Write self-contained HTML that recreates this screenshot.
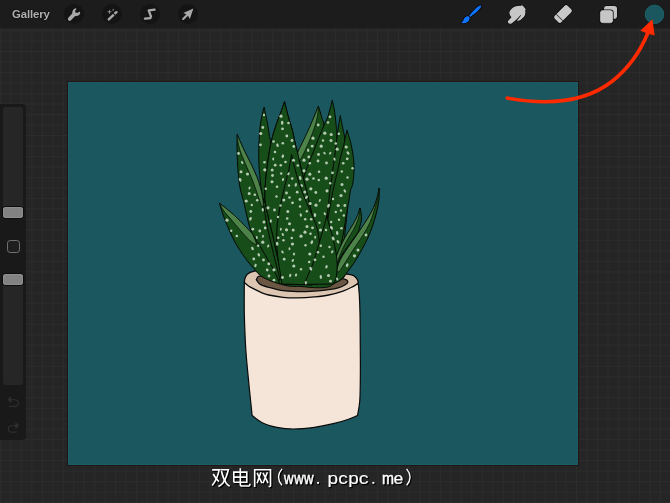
<!DOCTYPE html>
<html><head><meta charset="utf-8"><title>Procreate</title>
<style>
html,body{margin:0;padding:0;background:#252525;}
body{width:670px;height:503px;overflow:hidden;position:relative;font-family:"Liberation Sans",sans-serif;}
#grid{position:absolute;left:0;top:0;width:670px;height:503px;background-color:#252525;}
#topbar{position:absolute;left:0;top:0;width:670px;height:28px;background:#1c1c1c;}
#gallery{position:absolute;left:12.2px;top:6.6px;font-size:11.4px;line-height:14px;color:#b2b2b2;letter-spacing:-0.12px;font-weight:bold;text-shadow:0 0 1.5px #000,0 0 1px #000;}
.cb{position:absolute;top:3.8px;width:20px;height:20px;border-radius:50%;background:#141414;}
#canvas{position:absolute;left:68px;top:82px;width:510px;height:382.5px;background:#1b575f;box-shadow:0 0 0 1px #201616, inset 0 0 0 1px #1d5c64;}
#side{position:absolute;left:-6px;top:104px;width:31.7px;height:336px;border-radius:4px;background:#191919;}
.track{position:absolute;left:3px;width:20px;background:#262626;border-radius:3px;}
.handle{position:absolute;left:3px;width:20px;height:10.8px;border-radius:3.2px;background:#828282;box-shadow:inset 0 0 0 1px #8e8e8e,0 0 0 1px #0c0c0c;}
#sq{position:absolute;left:6.6px;top:239.8px;width:11px;height:11px;border:1.3px solid #707070;border-radius:3.2px;background:#1e1e1e;}
svg{position:absolute;left:0;top:0;will-change:transform;}
#gallery{will-change:transform;}
</style></head><body>
<div id="grid"></div>
<svg width="670" height="503" viewBox="0 0 670 503">
<defs><pattern id="gp" x="-0.05" y="-1.4" width="10.475" height="10.49" patternUnits="userSpaceOnUse">
<rect x="0" y="0" width="1" height="10.49" fill="#2c2c2c"/><rect x="0" y="0" width="10.475" height="1" fill="#2c2c2c"/></pattern></defs>
<rect x="0" y="28" width="670" height="475" fill="url(#gp)"/>
</svg>
<div id="canvas"></div>
<div id="topbar">
 <div id="gallery">Gallery</div>
 <div class="cb" style="left:64.1px"></div><div class="cb" style="left:102.0px"></div><div class="cb" style="left:139.9px"></div><div class="cb" style="left:177.8px"></div>
</div>
<div id="side"></div>
<div class="track" style="top:106.6px;height:111px"></div>
<div class="track" style="top:274px;height:111px"></div>
<div class="handle" style="top:207.2px"></div>
<div class="handle" style="top:274px"></div>
<div id="sq"></div>
<svg width="670" height="503" viewBox="0 0 670 503">
<path d="M244.3,282.5 C244.3,287.7 244.1,302.5 244.3,313.7 C244.6,324.9 245.1,338.3 245.8,349.5 C246.5,360.7 247.8,372.2 248.6,380.9 C249.4,389.6 250.1,396.1 250.7,401.8 C251.3,407.6 251.9,413.1 252.1,415.4 C253.8,416.6 258.1,420.7 262.2,422.7 C266.3,424.7 271.6,426.2 276.8,427.3 C282.0,428.4 287.2,429.0 293.5,429.0 C299.8,429.0 307.8,428.2 314.4,427.3 C321.0,426.4 327.6,425.0 333.2,423.7 C338.8,422.4 343.8,420.9 347.8,419.5 C351.9,418.1 355.9,416.2 357.5,415.6 C357.9,413.3 359.2,407.6 359.7,401.8 C360.2,396.0 360.2,389.6 360.3,380.9 C360.4,372.2 360.4,360.7 360.3,349.5 C360.2,338.3 360.2,322.8 360.0,313.7 C359.8,304.6 359.6,299.9 359.3,295.0 C359.0,290.1 358.5,285.8 358.3,284.0 Z" fill="#f5e5d8" stroke="#0a0a0a" stroke-width="1.2" stroke-linejoin="round"/><path d="M244.3,282.5 C245.0,283.1 246.8,284.9 248.5,286.0 C250.2,287.1 252.2,288.1 254.3,289.2 C256.4,290.3 258.6,291.4 261.0,292.4 C263.4,293.4 265.0,294.2 268.7,295.0 C272.4,295.8 278.2,296.8 283.0,297.3 C287.8,297.8 292.1,298.0 297.3,297.9 C302.5,297.8 309.1,297.4 314.3,296.9 C319.5,296.4 323.9,296.0 328.7,295.0 C333.5,294.0 339.0,292.5 343.0,291.1 C347.0,289.7 350.0,288.1 352.5,286.8 C355.0,285.5 356.9,284.1 357.8,283.5 Q358.8,281 356.4,278.2 Q354.5,275.6 351.6,274.9 L345.8,273.9 L300,268 L254.3,271.1 Q249.5,272 247.2,274.4 Q244.6,277 244.3,282.5 Z" fill="#dcc6b2" stroke="#0a0a0a" stroke-width="1.3" stroke-linejoin="round"/><path d="M256.2,279.7 C256.7,280.3 258.0,282.5 259.1,283.5 C260.2,284.5 261.4,285.0 263.0,285.6 C264.6,286.2 265.4,286.5 268.7,287.3 C272.0,288.1 278.2,290.0 283.0,290.7 C287.8,291.4 292.1,291.5 297.3,291.6 C302.5,291.7 309.1,291.4 314.3,291.1 C319.5,290.8 324.7,290.2 328.7,289.7 C332.7,289.1 335.5,288.6 338.2,287.8 C340.9,287.0 343.3,285.8 344.9,284.9 C346.5,284.0 347.5,283.3 347.8,282.5 C348.1,281.7 347.6,280.7 346.8,280.1 C346.0,279.5 343.6,278.9 343.0,278.7 L300,270 L258,276.5 Z" fill="#6b5644" stroke="#0a0a0a" stroke-width="1.2" stroke-linejoin="round"/><defs><clipPath id="pc"><path d="M257.6,272.6 C258.1,273.1 258.6,274.6 260.5,275.8 C262.4,277.1 265.8,278.8 268.7,280.1 C271.6,281.4 275.0,282.5 278.2,283.5 C281.4,284.5 285.2,285.4 287.8,285.9 C290.4,286.4 291.5,286.3 293.5,286.4 C295.5,286.5 297.3,286.2 300.0,286.4 C302.7,286.5 306.4,287.1 309.6,287.3 C312.8,287.5 315.9,287.9 319.1,287.8 C322.3,287.7 326.1,287.5 328.7,286.8 C331.2,286.1 332.2,284.8 334.4,283.5 C336.6,282.2 340.1,280.7 342.0,279.2 C343.9,277.7 344.8,275.8 345.8,274.4 C346.8,273.0 347.6,271.6 348.0,271.0 L400,271 L400,90 L200,90 L200,272.6 Z"/></clipPath></defs><g clip-path="url(#pc)"><path d="M262,200 L340,200 L346,275 L338,290 L262,290 L256,274 Z" fill="#174d18"/><path d="M264.1,107.0 C263.7,108.7 262.4,112.9 261.7,116.9 C261.0,120.9 260.2,124.5 259.7,130.8 C259.2,137.1 258.7,147.3 258.7,154.6 C258.7,161.9 259.1,167.8 259.7,174.5 C260.3,181.2 261.1,190.1 262.1,195.0 C263.1,199.9 264.9,202.5 265.5,204.0 L272.0,204.0 C272.0,196.7 272.2,169.9 272.0,160.0 C271.8,150.1 271.4,148.6 271.0,144.7 C270.6,140.8 270.2,140.0 269.6,136.7 C269.1,133.4 268.4,128.8 267.7,124.8 C267.0,120.8 265.9,115.9 265.3,112.9 C264.7,109.9 264.3,108.0 264.1,107.0 Z" fill="#174d18" stroke="#050a05" stroke-width="1" stroke-linejoin="round"/><path d="M237.2,134.5 C237.2,136.5 237.0,142.3 237.0,146.7 C237.0,151.0 237.2,156.0 237.4,160.6 C237.6,165.2 238.0,170.2 238.4,174.5 C238.8,178.8 239.2,183.1 239.8,186.5 C240.4,189.9 241.1,192.1 241.8,195.0 C242.5,197.9 243.4,200.4 244.2,203.9 C245.0,207.4 245.9,211.8 246.8,215.8 C247.7,219.8 248.5,223.8 249.8,227.8 C251.1,231.8 252.7,234.3 254.7,239.7 C256.7,245.1 259.8,253.3 262.0,260.0 C264.2,266.7 267.0,276.7 268.0,280.0 L280.0,280.0 C278.0,271.7 271.0,244.2 268.0,230.0 C265.0,215.8 263.4,202.2 262.1,195.0 C260.8,187.8 261.0,189.6 260.1,186.5 C259.2,183.4 258.2,180.3 256.7,176.5 C255.1,172.7 252.8,167.7 250.8,163.6 C248.8,159.5 246.6,155.5 244.8,151.7 C243.0,147.9 241.1,143.6 239.8,140.7 C238.5,137.8 237.6,135.5 237.2,134.5 Z" fill="#174d18" stroke="#050a05" stroke-width="1" stroke-linejoin="round"/><path d="M318.4,106.3 C317.8,107.7 316.3,111.5 314.9,114.9 C313.5,118.3 311.7,122.7 309.9,126.8 C308.1,130.9 305.7,135.9 303.9,139.7 C302.1,143.5 300.0,147.1 298.9,149.7 C297.8,152.3 297.5,151.3 297.0,155.5 C296.5,159.7 296.2,167.6 296.0,175.0 C295.8,182.4 295.7,182.5 296.0,200.0 C296.3,217.5 297.7,266.7 298.0,280.0 L322.0,280.0 C322.7,266.7 325.3,221.7 326.0,200.0 C326.7,178.3 326.4,162.5 326.0,150.0 C325.6,137.5 324.4,130.0 323.8,124.8 C323.2,119.6 322.8,121.1 322.2,118.9 C321.6,116.8 320.8,114.0 320.2,111.9 C319.6,109.8 318.7,107.2 318.4,106.3 Z" fill="#174d18" stroke="#050a05" stroke-width="1" stroke-linejoin="round"/><path d="M332.3,100.3 C331.9,101.9 330.6,107.1 329.8,109.9 C329.1,112.7 328.8,114.2 327.8,116.9 C326.8,119.6 325.3,122.3 323.8,125.8 C322.3,129.3 320.5,133.5 318.8,137.7 C317.1,141.8 315.5,146.5 313.9,150.7 C312.2,154.8 310.4,158.8 308.9,162.6 C307.4,166.4 306.0,169.8 304.9,173.5 C303.8,177.2 303.0,180.9 302.3,184.5 C301.6,188.1 301.3,189.1 300.9,195.0 C300.5,200.9 299.8,205.5 300.0,220.0 C300.2,234.5 301.7,271.7 302.0,282.0 L334.0,282.0 C334.7,268.3 337.3,220.3 338.0,200.0 C338.7,179.7 338.2,170.9 338.0,160.0 C337.8,149.1 337.2,140.3 336.9,134.8 C336.6,129.3 336.6,129.8 336.3,126.8 C336.0,123.8 335.7,119.9 335.3,116.9 C334.9,113.9 334.6,111.7 334.1,108.9 C333.6,106.1 332.6,101.7 332.3,100.3 Z" fill="#174d18" stroke="#050a05" stroke-width="1" stroke-linejoin="round"/><path d="M340.3,115.6 C340.0,117.1 339.2,121.6 338.7,124.8 C338.2,128.0 337.7,131.5 337.3,134.8 C336.9,138.1 336.5,141.1 336.1,144.7 C335.7,148.3 335.3,152.3 334.7,156.6 C334.1,160.9 333.3,165.8 332.7,170.5 C332.1,175.2 331.4,180.4 330.8,184.5 C330.2,188.6 330.2,187.4 329.4,195.0 C328.6,202.6 327.2,215.8 326.0,230.0 C324.8,244.2 322.7,271.7 322.0,280.0 L340.0,280.0 C341.3,266.7 346.8,220.0 348.0,200.0 C349.2,180.0 347.6,170.4 347.0,160.0 C346.4,149.6 345.3,142.6 344.7,137.7 C344.1,132.8 343.8,133.3 343.3,130.8 C342.8,128.3 342.2,125.3 341.7,122.8 C341.2,120.3 340.5,116.8 340.3,115.6 Z" fill="#174d18" stroke="#050a05" stroke-width="1" stroke-linejoin="round"/><path d="M347.1,130.1 C346.8,131.4 345.9,134.9 345.3,137.7 C344.7,140.5 344.1,143.5 343.3,146.7 C342.5,149.8 341.6,152.9 340.7,156.6 C339.8,160.2 339.0,164.6 338.1,168.6 C337.2,172.6 336.3,176.1 335.3,180.5 C334.3,184.9 333.7,186.8 332.1,195.0 C330.6,203.2 328.4,215.5 326.0,230.0 C323.6,244.5 319.3,273.3 318.0,282.0 L335.0,282.0 C335.2,280.6 335.7,276.6 336.1,273.5 C336.5,270.4 336.8,266.9 337.3,263.6 C337.8,260.3 338.6,256.9 339.3,253.6 C340.0,250.3 340.6,247.0 341.3,243.7 C342.0,240.4 342.6,237.3 343.3,233.7 C344.0,230.0 344.6,225.8 345.3,221.8 C346.0,217.8 346.7,213.6 347.3,209.9 C347.9,206.2 348.4,203.2 349.0,199.9 C349.6,196.6 350.0,192.6 350.6,190.0 C351.2,187.4 352.1,187.1 352.6,184.5 C353.1,181.9 353.6,177.8 353.8,174.5 C354.0,171.2 354.1,167.9 354.0,164.6 C353.9,161.3 353.5,157.9 353.0,154.6 C352.5,151.3 351.9,147.7 351.2,144.7 C350.5,141.7 349.7,139.1 349.0,136.7 C348.3,134.3 347.4,131.2 347.1,130.1 Z" fill="#174d18" stroke="#050a05" stroke-width="1" stroke-linejoin="round"/><path d="M284.6,101.7 C283.9,103.6 281.8,109.7 280.6,112.9 C279.4,116.1 278.8,117.5 277.6,120.8 C276.4,124.1 274.8,128.8 273.6,132.8 C272.4,136.8 271.6,139.7 270.6,144.7 C269.6,149.7 268.5,156.6 267.7,162.6 C266.9,168.6 266.1,174.3 265.6,180.5 C265.2,186.7 264.4,193.2 265.0,199.7 C265.6,206.2 267.6,213.6 268.9,219.6 C270.2,225.6 271.5,229.6 272.9,235.5 C274.2,241.4 275.1,246.9 277.0,255.0 C278.9,263.1 282.8,279.2 284.0,284.0 L318.0,284.0 C317.8,276.7 318.0,251.5 317.0,240.0 C316.0,228.5 313.6,222.5 312.0,215.0 C310.4,207.5 308.7,200.4 307.4,195.0 C306.1,189.6 305.4,186.6 304.4,182.5 C303.4,178.4 302.5,174.8 301.5,170.5 C300.5,166.2 299.5,160.9 298.5,156.6 C297.5,152.3 296.5,149.0 295.5,144.7 C294.5,140.4 293.5,134.8 292.5,130.8 C291.5,126.8 290.5,124.3 289.5,120.8 C288.5,117.3 287.3,113.1 286.5,109.9 C285.7,106.7 284.9,103.1 284.6,101.7 Z" fill="#174d18" stroke="#050a05" stroke-width="1" stroke-linejoin="round"/><path d="M237.2,134.5 C237.6,135.5 238.5,137.8 239.8,140.7 C241.1,143.6 243.0,147.9 244.8,151.7 C246.6,155.5 248.8,159.5 250.8,163.6 C252.8,167.7 255.1,172.7 256.7,176.5 C258.2,180.3 259.2,183.4 260.1,186.5 C261.0,189.6 261.5,191.9 262.1,195.0 C262.7,198.1 263.3,203.3 263.5,205.0 L262.0,207.4 C261.3,205.4 259.4,199.8 257.9,195.4 C256.4,191.0 254.6,185.8 252.8,181.1 C251.0,176.4 248.9,171.8 246.9,167.2 C244.9,162.5 242.5,157.4 241.0,153.2 C239.5,149.0 238.5,145.1 237.9,142.0 C237.3,138.9 237.3,135.8 237.2,134.5 Z" fill="#4d8249" stroke="#050a05" stroke-width="0.7" stroke-linejoin="round"/><path d="M318.4,106.3 C317.8,107.7 316.3,111.5 314.9,114.9 C313.5,118.3 311.7,122.7 309.9,126.8 C308.1,130.9 305.7,135.9 303.9,139.7 C302.1,143.5 300.0,147.1 298.9,149.7 C297.8,152.3 297.3,154.5 297.0,155.5 L299.5,160.5 C299.8,160.2 300.1,160.2 301.0,158.6 C301.9,157.0 303.5,153.8 305.0,150.7 C306.5,147.5 308.3,143.7 309.9,139.7 C311.5,135.7 313.4,130.9 314.7,126.8 C316.0,122.7 317.0,118.3 317.6,114.9 C318.2,111.5 318.3,107.7 318.4,106.3 Z" fill="#4d8249" stroke="#050a05" stroke-width="0.7" stroke-linejoin="round"/><path d="M284.6,101.7 C283.9,103.6 281.8,109.7 280.6,112.9 C279.4,116.1 278.8,117.5 277.6,120.8 C276.4,124.1 274.8,128.8 273.6,132.8 C272.4,136.8 271.6,139.7 270.6,144.7 C269.6,149.7 268.5,156.6 267.7,162.6 C266.9,168.6 266.1,174.3 265.6,180.5 C265.2,186.7 264.4,193.2 265.0,199.7 C265.6,206.2 267.6,213.6 268.9,219.6 C270.2,225.6 271.5,229.6 272.9,235.5 C274.2,241.4 275.1,246.9 277.0,255.0 C278.9,263.1 282.8,279.2 284.0,284.0 L318.0,284.0 C317.8,276.7 318.0,251.5 317.0,240.0 C316.0,228.5 313.6,222.5 312.0,215.0 C310.4,207.5 308.7,200.4 307.4,195.0 C306.1,189.6 305.4,186.6 304.4,182.5 C303.4,178.4 302.5,174.8 301.5,170.5 C300.5,166.2 299.5,160.9 298.5,156.6 C297.5,152.3 296.5,149.0 295.5,144.7 C294.5,140.4 293.5,134.8 292.5,130.8 C291.5,126.8 290.5,124.3 289.5,120.8 C288.5,117.3 287.3,113.1 286.5,109.9 C285.7,106.7 284.9,103.1 284.6,101.7 Z" fill="#174d18" stroke="#050a05" stroke-width="1" stroke-linejoin="round"/><path d="M219.3,203.2 C219.7,204.3 220.6,207.1 221.5,209.9 C222.4,212.7 223.5,216.2 224.9,219.8 C226.3,223.4 228.1,227.7 229.9,231.7 C231.7,235.7 233.7,239.9 235.8,243.7 C238.0,247.5 240.5,251.2 242.8,254.6 C245.1,258.0 247.5,261.2 249.8,264.0 C252.1,266.8 254.9,269.6 256.7,271.6 C258.5,273.6 258.3,273.9 260.5,275.8 C262.7,277.7 268.4,281.8 270.0,283.0 L280.0,284.0 C278.9,281.6 275.7,273.6 273.6,269.5 C271.6,265.4 269.6,262.9 267.7,259.6 C265.8,256.3 263.9,252.8 262.1,249.6 C260.3,246.4 258.6,243.6 256.7,240.7 C254.8,237.8 253.0,234.8 250.8,232.1 C248.7,229.4 246.3,227.4 243.8,224.8 C241.3,222.2 238.5,219.3 235.8,216.8 C233.2,214.3 230.7,212.2 227.9,209.9 C225.2,207.6 220.7,204.3 219.3,203.2 Z" fill="#174d18" stroke="#050a05" stroke-width="1" stroke-linejoin="round"/><path d="M379.3,188.2 C378.8,190.1 377.6,196.3 376.5,199.9 C375.4,203.5 374.0,206.8 372.5,209.9 C371.0,213.1 369.3,215.8 367.5,218.8 C365.7,221.8 363.6,224.8 361.6,227.8 C359.6,230.8 357.8,233.5 355.6,236.7 C353.4,239.8 350.8,243.5 348.6,246.7 C346.5,249.8 344.4,252.8 342.7,255.6 C341.0,258.4 339.7,261.0 338.7,263.6 C337.7,266.2 337.5,268.3 336.7,271.5 C335.9,274.7 334.4,281.1 334.0,283.0 L338.0,282.0 C338.9,281.1 342.1,278.6 343.7,276.9 C345.3,275.1 346.0,273.7 347.7,271.5 C349.4,269.3 351.6,266.6 353.6,263.6 C355.6,260.6 357.6,257.1 359.6,253.6 C361.6,250.1 363.7,246.3 365.5,242.7 C367.3,239.0 369.0,235.5 370.5,231.7 C372.0,227.9 373.4,223.4 374.5,219.8 C375.6,216.2 376.4,213.2 377.1,209.9 C377.8,206.6 378.5,203.5 378.9,199.9 C379.3,196.3 379.2,190.1 379.3,188.2 Z" fill="#174d18" stroke="#050a05" stroke-width="1" stroke-linejoin="round"/><path d="M360.0,208.0 C359.6,209.2 358.9,212.4 357.8,215.0 C356.7,217.6 355.0,220.9 353.4,223.8 C351.8,226.7 349.8,229.4 348.0,232.5 C346.2,235.6 344.1,239.1 342.5,242.4 C340.9,245.7 339.2,249.5 338.1,252.2 C337.0,254.9 336.4,256.5 335.9,258.8 C335.3,261.1 335.0,264.8 334.8,266.0 L337.0,266.4 C337.7,264.6 339.4,259.1 341.4,255.5 C343.4,251.9 346.4,248.4 349.1,244.6 C351.8,240.8 356.1,235.3 357.8,232.5 C359.6,229.7 359.0,229.6 359.6,227.5 C360.2,225.4 361.1,222.2 361.4,220.0 C361.7,217.8 361.4,216.0 361.2,214.0 C361.0,212.0 360.2,209.0 360.0,208.0 Z" fill="#174d18" stroke="#050a05" stroke-width="1" stroke-linejoin="round"/><path d="M219.3,203.2 C220.7,204.3 225.2,207.6 227.9,209.9 C230.7,212.2 233.2,214.3 235.8,216.8 C238.5,219.3 241.3,222.2 243.8,224.8 C246.3,227.4 249.3,230.4 250.8,232.1 C252.3,233.8 252.6,234.4 252.9,234.9 L256.9,244.4 C256.3,244.2 254.8,244.3 253.2,243.2 C251.6,242.1 249.5,240.4 247.2,238.0 C244.9,235.6 241.8,232.0 239.2,229.0 C236.6,226.0 234.0,222.9 231.4,219.8 C228.8,216.7 225.6,213.4 223.6,210.6 C221.6,207.8 220.0,204.4 219.3,203.2 Z" fill="#4d8249" stroke="#050a05" stroke-width="0.7" stroke-linejoin="round"/><path d="M360.0,208.0 C359.6,209.2 358.9,212.4 357.8,215.0 C356.7,217.6 355.0,220.9 353.4,223.8 C351.8,226.7 349.8,229.4 348.0,232.5 C346.2,235.6 344.1,239.1 342.5,242.4 C340.9,245.7 339.2,249.5 338.1,252.2 C337.0,254.9 336.4,256.5 335.9,258.8 C335.3,261.1 335.0,264.8 334.8,266.0 L336.5,266.0 C336.9,264.7 337.8,260.8 338.8,258.0 C339.8,255.2 341.1,252.1 342.5,249.0 C343.9,245.9 345.7,242.8 347.5,239.5 C349.3,236.2 351.9,232.6 353.5,229.5 C355.1,226.4 356.4,223.8 357.4,221.0 C358.4,218.2 359.2,215.2 359.6,213.0 C360.0,210.8 359.9,208.8 360.0,208.0 Z" fill="#4d8249" stroke="#050a05" stroke-width="0.7" stroke-linejoin="round"/><path d="M379.3,188.2 C378.8,190.1 377.6,196.3 376.5,199.9 C375.4,203.5 374.0,206.8 372.5,209.9 C371.0,213.1 369.3,215.8 367.5,218.8 C365.7,221.8 363.6,224.8 361.6,227.8 C359.6,230.8 357.8,233.5 355.6,236.7 C353.4,239.8 350.8,243.5 348.6,246.7 C346.5,249.8 344.4,252.8 342.7,255.6 C341.0,258.4 339.7,261.0 338.7,263.6 C337.7,266.2 337.0,270.2 336.7,271.5 L339.2,271.9 C340.1,270.4 342.2,267.2 344.8,263.2 C347.4,259.2 351.4,252.6 354.5,247.8 C357.6,243.1 360.7,239.0 363.3,234.7 C365.9,230.4 368.2,226.5 370.2,222.0 C372.1,217.5 373.6,212.0 375.0,207.5 C376.4,203.0 377.8,198.2 378.5,195.0 C379.2,191.8 379.2,189.3 379.3,188.2 Z" fill="#4d8249" stroke="#050a05" stroke-width="0.7" stroke-linejoin="round"/><path d="M291.6,154.6 C291.1,157.2 289.9,164.7 288.8,169.9 C287.7,175.1 286.1,180.2 284.8,185.8 C283.5,191.4 282.0,198.1 280.8,203.7 C279.6,209.3 278.5,214.3 277.8,219.6 C277.1,224.9 276.9,229.6 276.8,235.5 C276.8,241.4 276.6,246.9 277.5,255.0 C278.4,263.1 281.2,279.2 282.0,284.0 L312.0,285.0 C313.0,282.5 316.7,275.8 318.0,270.0 C319.3,264.2 319.5,255.8 319.6,250.0 C319.7,244.2 319.3,239.9 318.6,235.5 C317.9,231.1 317.1,227.9 315.6,223.6 C314.1,219.3 311.6,214.2 309.6,209.6 C307.6,204.9 305.5,200.3 303.7,195.7 C301.9,191.1 300.2,186.4 298.7,181.8 C297.2,177.2 295.9,172.4 294.7,167.9 C293.5,163.4 292.1,156.8 291.6,154.6 Z" fill="#174d18" stroke="#050a05" stroke-width="1" stroke-linejoin="round"/><path d="M326.8,215.6 C326.5,217.0 325.6,220.8 324.8,223.8 C324.0,226.8 323.0,229.7 321.8,233.7 C320.6,237.7 319.3,242.7 317.8,247.7 C316.3,252.7 314.5,259.0 312.9,263.6 C311.2,268.2 309.4,272.0 307.9,275.5 C306.4,279.0 304.6,282.9 303.9,284.4 L333.0,284.0 C333.4,283.2 335.0,281.9 335.7,279.5 C336.4,277.1 336.9,273.1 337.1,269.5 C337.3,265.9 337.1,261.6 336.7,257.6 C336.3,253.6 335.5,249.7 334.7,245.7 C333.9,241.7 332.7,237.3 331.7,233.7 C330.7,230.0 329.6,226.8 328.8,223.8 C328.0,220.8 327.1,217.0 326.8,215.6 Z" fill="#174d18" stroke="#050a05" stroke-width="1" stroke-linejoin="round"/><g fill="#b4cab2"><ellipse cx="270.8" cy="221.0" rx="1.12" ry="1.75" transform="rotate(2 270.8 221.0)"/><ellipse cx="290.2" cy="275.5" rx="1.12" ry="1.75" transform="rotate(14 290.2 275.5)"/><ellipse cx="277.2" cy="243.8" rx="1.28" ry="2.00" transform="rotate(-6 277.2 243.8)"/><circle cx="275.0" cy="152.0" r="1.3"/><circle cx="253.8" cy="259.0" r="1.4"/><circle cx="318.5" cy="154.5" r="1.4"/><ellipse cx="337.2" cy="233.0" rx="1.28" ry="2.00" transform="rotate(-4 337.2 233.0)"/><circle cx="287.8" cy="211.5" r="1.5"/><circle cx="358.0" cy="250.0" r="1.5"/><circle cx="366.0" cy="235.0" r="1.4"/><circle cx="308.8" cy="157.0" r="1.4"/><ellipse cx="262.8" cy="209.8" rx="1.12" ry="1.75" transform="rotate(-5 262.8 209.8)"/><ellipse cx="334.5" cy="159.2" rx="1.04" ry="1.62" transform="rotate(-17 334.5 159.2)"/><circle cx="263.5" cy="260.0" r="1.4"/><ellipse cx="258.8" cy="254.8" rx="1.12" ry="1.75" transform="rotate(-21 258.8 254.8)"/><ellipse cx="277.5" cy="145.2" rx="1.20" ry="1.88" transform="rotate(-14 277.5 145.2)"/><ellipse cx="328.5" cy="205.8" rx="1.28" ry="2.00" transform="rotate(22 328.5 205.8)"/><circle cx="301.0" cy="269.2" r="1.2"/><circle cx="265.8" cy="188.8" r="1.2"/><ellipse cx="337.2" cy="279.0" rx="1.04" ry="1.62" transform="rotate(-19 337.2 279.0)"/><circle cx="293.5" cy="160.2" r="1.5"/><ellipse cx="331.5" cy="227.8" rx="1.28" ry="2.00" transform="rotate(-32 331.5 227.8)"/><ellipse cx="242.2" cy="162.5" rx="1.04" ry="1.62" transform="rotate(-24 242.2 162.5)"/><circle cx="341.8" cy="171.5" r="1.2"/><circle cx="338.2" cy="205.5" r="1.6"/><ellipse cx="273.2" cy="159.0" rx="0.96" ry="1.50" transform="rotate(-1 273.2 159.0)"/><circle cx="274.5" cy="210.0" r="1.4"/><ellipse cx="280.8" cy="229.2" rx="0.96" ry="1.50" transform="rotate(11 280.8 229.2)"/><circle cx="312.2" cy="146.2" r="1.4"/><ellipse cx="332.2" cy="251.8" rx="1.04" ry="1.62" transform="rotate(30 332.2 251.8)"/><circle cx="320.5" cy="230.0" r="1.5"/><circle cx="333.0" cy="199.0" r="1.2"/><circle cx="315.8" cy="192.5" r="1.4"/><circle cx="301.0" cy="236.2" r="1.6"/><circle cx="300.0" cy="206.5" r="1.2"/><circle cx="330.2" cy="183.2" r="1.2"/><ellipse cx="347.2" cy="265.2" rx="1.28" ry="2.00" transform="rotate(18 347.2 265.2)"/><circle cx="278.0" cy="217.0" r="1.2"/><circle cx="324.8" cy="133.2" r="1.6"/><circle cx="252.8" cy="229.2" r="1.4"/><circle cx="297.2" cy="192.2" r="1.4"/><circle cx="330.5" cy="281.2" r="1.4"/><circle cx="319.0" cy="171.8" r="1.3"/><circle cx="309.8" cy="174.2" r="1.6"/><circle cx="286.5" cy="229.8" r="1.6"/><circle cx="264.8" cy="169.8" r="1.6"/><circle cx="284.2" cy="259.2" r="1.4"/><circle cx="318.0" cy="161.0" r="1.4"/><circle cx="286.8" cy="136.0" r="1.4"/><circle cx="293.8" cy="146.5" r="1.4"/><ellipse cx="315.0" cy="215.0" rx="1.28" ry="2.00" transform="rotate(-6 315.0 215.0)"/><circle cx="337.2" cy="149.2" r="1.6"/><circle cx="326.0" cy="230.0" r="1.2"/><circle cx="257.2" cy="200.2" r="1.3"/><circle cx="318.8" cy="180.0" r="1.3"/><circle cx="327.0" cy="190.8" r="1.6"/><circle cx="297.8" cy="165.5" r="1.3"/><circle cx="328.5" cy="275.5" r="1.5"/><circle cx="250.8" cy="211.5" r="1.4"/><circle cx="258.2" cy="245.8" r="1.2"/><ellipse cx="324.5" cy="153.2" rx="0.96" ry="1.50" transform="rotate(-38 324.5 153.2)"/><circle cx="289.5" cy="197.5" r="1.3"/><circle cx="311.2" cy="219.2" r="1.3"/><ellipse cx="344.8" cy="191.0" rx="1.12" ry="1.75" transform="rotate(-33 344.8 191.0)"/><circle cx="277.0" cy="186.8" r="1.3"/><circle cx="305.2" cy="219.2" r="1.3"/><ellipse cx="288.5" cy="173.8" rx="1.04" ry="1.62" transform="rotate(35 288.5 173.8)"/><circle cx="251.8" cy="205.0" r="1.2"/><circle cx="309.2" cy="262.0" r="1.3"/><circle cx="331.0" cy="140.5" r="1.5"/><circle cx="285.5" cy="162.0" r="1.3"/><ellipse cx="311.8" cy="242.2" rx="1.28" ry="2.00" transform="rotate(19 311.8 242.2)"/><circle cx="318.0" cy="252.2" r="1.3"/><circle cx="262.8" cy="127.5" r="1.4"/><circle cx="318.2" cy="125.0" r="1.4"/><ellipse cx="292.8" cy="260.5" rx="1.04" ry="1.62" transform="rotate(31 292.8 260.5)"/><ellipse cx="300.2" cy="178.0" rx="1.28" ry="2.00" transform="rotate(-14 300.2 178.0)"/><circle cx="286.5" cy="193.0" r="1.4"/><ellipse cx="348.0" cy="153.0" rx="1.20" ry="1.88" transform="rotate(-39 348.0 153.0)"/><circle cx="332.5" cy="172.8" r="1.4"/><ellipse cx="250.5" cy="218.8" rx="1.20" ry="1.88" transform="rotate(21 250.5 218.8)"/><circle cx="307.0" cy="179.2" r="1.6"/><circle cx="335.8" cy="212.0" r="1.2"/><circle cx="347.5" cy="177.5" r="1.2"/><circle cx="292.2" cy="178.5" r="1.3"/><circle cx="341.0" cy="195.5" r="1.6"/><circle cx="347.2" cy="158.8" r="1.4"/><circle cx="341.5" cy="228.2" r="1.3"/><ellipse cx="319.8" cy="200.5" rx="0.96" ry="1.50" transform="rotate(20 319.8 200.5)"/><circle cx="281.2" cy="173.5" r="1.2"/><circle cx="236.8" cy="236.0" r="1.3"/><ellipse cx="320.8" cy="277.0" rx="1.20" ry="1.88" transform="rotate(-4 320.8 277.0)"/><ellipse cx="296.0" cy="275.0" rx="1.04" ry="1.62" transform="rotate(22 296.0 275.0)"/><circle cx="282.5" cy="277.5" r="1.4"/><circle cx="312.5" cy="227.8" r="1.4"/><ellipse cx="289.5" cy="248.8" rx="0.96" ry="1.50" transform="rotate(3 289.5 248.8)"/><ellipse cx="294.0" cy="254.0" rx="1.04" ry="1.62" transform="rotate(2 294.0 254.0)"/><circle cx="274.0" cy="280.2" r="1.4"/><ellipse cx="324.8" cy="213.8" rx="1.04" ry="1.62" transform="rotate(-24 324.8 213.8)"/><circle cx="267.2" cy="270.0" r="1.4"/><circle cx="241.0" cy="171.8" r="1.5"/><circle cx="352.5" cy="168.2" r="1.2"/><circle cx="292.5" cy="244.0" r="1.6"/><circle cx="304.0" cy="160.2" r="1.6"/><ellipse cx="249.5" cy="188.0" rx="0.96" ry="1.50" transform="rotate(23 249.5 188.0)"/><circle cx="310.5" cy="233.8" r="1.3"/><ellipse cx="301.8" cy="185.5" rx="1.04" ry="1.62" transform="rotate(-39 301.8 185.5)"/><ellipse cx="338.0" cy="241.8" rx="1.20" ry="1.88" transform="rotate(-35 338.0 241.8)"/><ellipse cx="326.5" cy="266.8" rx="1.12" ry="1.75" transform="rotate(22 326.5 266.8)"/><circle cx="274.0" cy="269.8" r="1.6"/><circle cx="310.2" cy="203.5" r="1.5"/><ellipse cx="310.8" cy="268.8" rx="1.28" ry="2.00" transform="rotate(-26 310.8 268.8)"/><ellipse cx="315.2" cy="237.2" rx="0.96" ry="1.50" transform="rotate(9 315.2 237.2)"/><circle cx="343.2" cy="163.2" r="1.3"/><circle cx="260.5" cy="144.8" r="1.4"/><circle cx="231.2" cy="230.8" r="1.2"/><circle cx="346.2" cy="147.0" r="1.6"/><circle cx="321.2" cy="146.2" r="1.6"/><circle cx="282.5" cy="128.8" r="1.4"/><circle cx="288.5" cy="123.0" r="1.3"/><circle cx="354.5" cy="255.8" r="1.6"/><circle cx="329.5" cy="247.0" r="1.2"/><circle cx="344.8" cy="205.5" r="1.4"/><circle cx="326.2" cy="178.2" r="1.6"/><circle cx="305.5" cy="245.2" r="1.2"/><circle cx="278.2" cy="237.8" r="1.3"/><circle cx="320.8" cy="245.8" r="1.2"/><circle cx="272.5" cy="175.5" r="1.4"/><ellipse cx="256.8" cy="237.5" rx="0.96" ry="1.50" transform="rotate(-11 256.8 237.5)"/><circle cx="282.8" cy="143.2" r="1.3"/><circle cx="331.2" cy="222.0" r="1.2"/><circle cx="289.5" cy="223.8" r="1.5"/><circle cx="339.0" cy="219.8" r="1.2"/><circle cx="309.8" cy="163.2" r="1.3"/><circle cx="338.8" cy="133.8" r="1.3"/><circle cx="281.0" cy="116.2" r="1.6"/><circle cx="254.8" cy="194.8" r="1.3"/><circle cx="283.8" cy="200.0" r="1.6"/><circle cx="283.5" cy="240.2" r="1.2"/><ellipse cx="330.2" cy="153.2" rx="0.96" ry="1.50" transform="rotate(35 330.2 153.2)"/><ellipse cx="240.2" cy="179.8" rx="1.28" ry="2.00" transform="rotate(-21 240.2 179.8)"/><circle cx="264.0" cy="222.0" r="1.5"/><circle cx="331.2" cy="134.5" r="1.6"/><circle cx="268.8" cy="263.8" r="1.5"/><circle cx="265.2" cy="228.0" r="1.4"/><circle cx="259.8" cy="231.0" r="1.4"/><circle cx="293.2" cy="230.0" r="1.5"/><circle cx="328.0" cy="122.5" r="1.3"/><circle cx="309.8" cy="254.0" r="1.6"/><circle cx="272.0" cy="181.8" r="1.5"/><circle cx="287.2" cy="218.5" r="1.3"/><circle cx="335.8" cy="143.5" r="1.3"/><ellipse cx="255.5" cy="265.5" rx="1.12" ry="1.75" transform="rotate(16 255.5 265.5)"/><circle cx="275.2" cy="165.2" r="1.4"/><ellipse cx="305.8" cy="282.8" rx="1.12" ry="1.75" transform="rotate(-3 305.8 282.8)"/><ellipse cx="308.2" cy="150.2" rx="1.12" ry="1.75" transform="rotate(-9 308.2 150.2)"/><circle cx="269.0" cy="276.0" r="1.4"/><circle cx="289.0" cy="185.5" r="1.2"/><circle cx="342.0" cy="184.5" r="1.5"/><circle cx="326.5" cy="163.0" r="1.4"/><circle cx="304.0" cy="170.8" r="1.6"/><ellipse cx="282.8" cy="156.2" rx="1.20" ry="1.88" transform="rotate(16 282.8 156.2)"/><circle cx="264.5" cy="162.2" r="1.3"/><circle cx="292.0" cy="140.5" r="1.4"/><ellipse cx="268.2" cy="246.0" rx="1.04" ry="1.62" transform="rotate(21 268.2 246.0)"/><circle cx="292.5" cy="202.8" r="1.4"/><ellipse cx="333.2" cy="238.5" rx="1.28" ry="2.00" transform="rotate(-30 333.2 238.5)"/><ellipse cx="263.0" cy="236.2" rx="0.96" ry="1.50" transform="rotate(1 263.0 236.2)"/><ellipse cx="252.5" cy="248.5" rx="1.20" ry="1.88" transform="rotate(-24 252.5 248.5)"/><ellipse cx="283.0" cy="179.5" rx="1.04" ry="1.62" transform="rotate(18 283.0 179.5)"/><circle cx="319.5" cy="222.8" r="1.2"/><circle cx="249.2" cy="193.5" r="1.5"/><circle cx="291.8" cy="238.0" r="1.3"/><circle cx="273.5" cy="141.5" r="1.3"/><circle cx="247.5" cy="174.0" r="1.6"/><circle cx="260.8" cy="133.5" r="1.6"/><circle cx="272.2" cy="170.0" r="1.5"/><ellipse cx="282.2" cy="122.8" rx="1.28" ry="2.00" transform="rotate(-4 282.2 122.8)"/><circle cx="343.8" cy="215.5" r="1.2"/><circle cx="316.0" cy="205.2" r="1.6"/><circle cx="268.0" cy="207.8" r="1.6"/><circle cx="310.8" cy="188.8" r="1.6"/><circle cx="305.0" cy="232.2" r="1.6"/><circle cx="323.0" cy="140.5" r="1.2"/><ellipse cx="306.5" cy="197.2" rx="1.20" ry="1.88" transform="rotate(38 306.5 197.2)"/><circle cx="313.5" cy="178.5" r="1.3"/><circle cx="300.0" cy="199.5" r="1.4"/><circle cx="227.0" cy="220.2" r="1.6"/><circle cx="264.0" cy="115.0" r="1.2"/><ellipse cx="282.5" cy="252.0" rx="1.04" ry="1.62" transform="rotate(-28 282.5 252.0)"/><circle cx="330.0" cy="116.8" r="1.4"/><circle cx="238.5" cy="153.5" r="1.4"/><circle cx="293.8" cy="266.0" r="1.6"/><circle cx="313.0" cy="138.2" r="1.6"/><circle cx="323.5" cy="256.8" r="1.2"/><ellipse cx="300.8" cy="215.0" rx="1.12" ry="1.75" transform="rotate(-11 300.8 215.0)"/><circle cx="304.8" cy="192.0" r="1.5"/><circle cx="246.2" cy="201.0" r="1.6"/><circle cx="276.5" cy="196.5" r="1.2"/><circle cx="306.8" cy="211.2" r="1.2"/><ellipse cx="295.8" cy="184.8" rx="1.20" ry="1.88" transform="rotate(8 295.8 184.8)"/><circle cx="280.8" cy="165.2" r="1.3"/><circle cx="341.0" cy="210.5" r="1.2"/><circle cx="280.5" cy="205.5" r="1.2"/><ellipse cx="282.8" cy="234.5" rx="1.04" ry="1.62" transform="rotate(-21 282.8 234.5)"/><circle cx="307.0" cy="226.5" r="1.5"/><circle cx="262.8" cy="242.2" r="1.6"/><circle cx="315.0" cy="259.8" r="1.4"/></g></g><path d="M257.6,272.6 C258.1,273.1 258.6,274.6 260.5,275.8 C262.4,277.1 265.8,278.8 268.7,280.1 C271.6,281.4 275.0,282.5 278.2,283.5 C281.4,284.5 285.2,285.4 287.8,285.9 C290.4,286.4 291.5,286.3 293.5,286.4 C295.5,286.5 297.3,286.2 300.0,286.4 C302.7,286.5 306.4,287.1 309.6,287.3 C312.8,287.5 315.9,287.9 319.1,287.8 C322.3,287.7 326.1,287.5 328.7,286.8 C331.2,286.1 332.2,284.8 334.4,283.5 C336.6,282.2 340.1,280.7 342.0,279.2 C343.9,277.7 344.8,275.8 345.8,274.4 C346.8,273.0 347.6,271.6 348.0,271.0" fill="none" stroke="#050a05" stroke-width="1"/>
<!-- top-left icons -->
<g fill="#a9a9a9" stroke="none">
 <!-- wrench -->
 <path d="M68.35,17.75 L72.2,13.6 Q72.1,11.0 73.4,9.4 Q74.4,8.4 75.7,8.15 Q76.6,8.3 76.3,9.2 L75.3,10.4 Q74.9,11.6 75.5,12.4 Q76.4,13.0 77.9,12.75 L79.2,11.8 Q80.0,11.5 80.2,12.7 Q80.2,13.8 79.4,14.7 Q78.0,16.0 75.9,16.1 L74.9,16.2 L70.95,20.25 A1.8,1.8 0 0 1 68.35,17.75 Z"/>
 <!-- wand -->
 <path d="M107.95,18.5 L113.0,13.75 L114.65,15.5 L109.6,20.25 A1.2,1.2 0 0 1 107.95,18.5 Z"/>
 <path d="M113.7,13.1 L115.6,11.3 A1.2,1.2 0 0 1 117.25,13.05 L115.35,14.85 Z"/>
 <path d="M109.5,9.2 l0.6,2.0 l2.0,0.6 l-2.0,0.6 l-0.6,2.0 l-0.6,-2.0 l-2.0,-0.6 l2.0,-0.6 Z" fill="#8e8e8e"/>
 <path d="M113.1,8.5 l0.35,1.05 l1.05,0.35 l-1.05,0.35 l-0.35,1.05 l-0.35,-1.05 l-1.05,-0.35 l1.05,-0.35 Z" fill="#8e8e8e"/>
 <!-- arrow -->
 <path d="M193.4,8.6 L189.8,18.9 L187.4,14.7 L183.3,13.1 Z"/>
</g>
<path d="M183.2,18.9 L188.2,13.9" stroke="#a9a9a9" stroke-width="2.1" stroke-linecap="round" fill="none"/>
<!-- S -->
<g fill="none" stroke="#a9a9a9" stroke-width="2.3" stroke-linecap="round" stroke-linejoin="round">
<path d="M154.6,9.7 L148.7,10.4 L151.0,16.6"/>
<path d="M150.4,18.1 L144.9,18.7"/>
</g>
<!-- brush -->
<g fill="#0e74ff" stroke="#07070c" stroke-width="1.3" paint-order="stroke" stroke-linejoin="round">
 <path d="M468.6,16.5 Q472.8,11.3 475.7,8.6 Q479.6,4.8 481.1,5.6 Q481.8,7.1 477.8,11.0 Q474.3,14.2 469.4,17.4 Z"/>
 <path d="M469.2,16.5 Q466.0,15.5 464.3,18.2 Q463.6,20.6 461.6,22.6 Q461.3,23.3 462.2,23.3 Q466.0,23.3 468.3,21.4 Q470.5,19.0 469.2,16.5 Z"/>
</g>
<!-- smudge -->
<path d="M508.2,20.8 L511.4,17.2 Q508.6,14.4 509.6,11.6 Q511.6,7.6 516.0,6.2 Q518.6,5.4 520.4,5.9 Q521.6,4.8 522.9,5.8 L525.2,8.4 Q526.0,9.5 525.2,10.6 Q525.9,14.0 524.0,16.8 Q521.2,20.4 517.6,21.0 L516.9,20.0 L520.6,15.4 L516.2,19.8 L511.6,23.4 Q509.2,24.2 508.1,22.8 Q507.5,21.7 508.2,20.8 Z" fill="#c6c6c6" stroke="#070707" stroke-width="1.2" paint-order="stroke" stroke-linejoin="round"/>
<path d="M516.9,20.2 L520.5,15.6" stroke="#151515" stroke-width="0.9" fill="none" stroke-linecap="round"/>
<!-- eraser -->
<g transform="translate(563.0,14.0) rotate(-45.5)">
 <rect x="-9.2" y="-4.6" width="18.4" height="9.2" rx="2.1" ry="2.1" fill="#c8c8c8" stroke="#070707" stroke-width="1.2" paint-order="stroke"/>
 <rect x="-5.3" y="-4.6" width="0.8" height="9.2" fill="#2a2a2a"/>
</g>
<!-- layers -->
<rect x="604.0" y="6.0" width="13" height="12.8" rx="2.8" fill="#c4c4c4" stroke="#070707" stroke-width="1.2" paint-order="stroke"/>
<rect x="599.3" y="9.4" width="14.4" height="14.4" rx="3.4" fill="#070707"/>
<rect x="600.4" y="10.5" width="12.3" height="12.3" rx="2.5" fill="#c6c6c6" stroke="#d2d2d2" stroke-width="0.6"/>
<!-- colour -->
<circle cx="654.5" cy="14.3" r="10.2" fill="#100c0c"/>
<circle cx="654.5" cy="14.3" r="9.4" fill="#1b575f" stroke="#20656d" stroke-width="0.9"/>
<!-- undo / redo -->
<g fill="none" stroke="#2f2f2f" stroke-width="1.1" stroke-linecap="round" stroke-linejoin="round">
 <path d="M9.0,399.7 L15.0,399.7 A3.35,3.35 0 0 1 15.0,406.4 L9.3,406.4"/>
 <path d="M10.8,397.2 L8.3,399.7 L10.8,402.2 Z" fill="#2f2f2f"/>
 <path d="M17.4,425.7 L11.6,425.7 A3.2,3.2 0 0 0 11.6,432.1 L16.4,432.1"/>
 <path d="M15.8,423.2 L18.3,425.7 L15.8,428.2 Z" fill="#2f2f2f"/>
</g>
<!-- red arrow -->
<path d="M507.2,98.1 C 548,105.5 586,102 612.5,81 C 630,67 641,49.5 647.6,33.5" fill="none" stroke="#ff2a00" stroke-width="3.6" stroke-linecap="round"/>
<path d="M652.4,19.2 L654.7,35.6 L647.3,33.6 L640.3,30.8 Z" fill="#ff2a00"/>
<!-- watermark -->
<g id="wm"><defs><g id="cjk">
 <path d="M212.2,469.9 L219.1,469.9 Q217.6,479.0 212.2,485.4"/>
 <path d="M213.2,474.0 Q215.6,478.4 218.9,481.6"/>
 <path d="M220.3,469.7 L228.4,469.7 Q226.6,477.8 223.0,483.0 Q221,485.3 218.4,486.5"/>
 <path d="M221.4,471.0 Q223.2,478.6 226.1,483.0 Q227.6,485.0 229.7,486.2"/>
 <path d="M233.8,482.2 L233.8,472.1 L246.8,472.1 L246.8,482.2 L233.8,482.2 M233.8,477.1 L246.8,477.1"/>
 <path d="M240.3,468.3 L240.3,484.2 Q240.3,486.0 242.3,486.0 L249.0,486.0 Q249.9,486.0 249.9,483.8"/>
 <path d="M254.7,486.9 L254.7,469.8 L270.5,469.8 L270.5,485.4 Q270.5,486.7 268.6,486.5"/>
 <path d="M257.1,472.9 L261.9,483.2 M260.9,472.2 L257.1,483.2 M263.0,472.9 L268.1,483.2 M267.4,472.2 L263.0,483.2"/>
</g></defs><g fill="none" stroke-linecap="butt" stroke-linejoin="miter"><use href="#cjk" transform="translate(1.1,1.1)" stroke="#000" stroke-width="1.9"/><use href="#cjk" stroke="#fff" stroke-width="1.6"/></g><g font-family="'Liberation Sans',sans-serif" font-size="16.8px"><g transform="translate(1.1,1.1)" fill="#000" stroke="#000"><rect x="317.1" y="481.9" width="1.9" height="1.9" stroke="none"/><rect x="372.4" y="481.9" width="1.9" height="1.9" stroke="none"/><path d="M282.0,468.9 Q275.0,477.1 282.0,485.4" fill="none" stroke-width="1.35"/><path d="M406.6,468.9 Q413.6,477.1 406.6,485.4" fill="none" stroke-width="1.35"/></g><text transform="translate(285.02,484.80) scale(0.787,1)" fill="#000" stroke="#000" stroke-width="0.8500000000000001">w</text><text transform="translate(295.32,484.80) scale(0.779,1)" fill="#000" stroke="#000" stroke-width="0.8500000000000001">w</text><text transform="translate(305.22,484.80) scale(0.787,1)" fill="#000" stroke="#000" stroke-width="0.8500000000000001">w</text><text transform="translate(328.58,484.80) scale(1.125,1)" fill="#000" stroke="#000" stroke-width="0.44999999999999996">p</text><text transform="translate(339.29,484.80) scale(1.132,1)" fill="#000" stroke="#000" stroke-width="0.44999999999999996">c</text><text transform="translate(349.38,484.80) scale(1.125,1)" fill="#000" stroke="#000" stroke-width="0.44999999999999996">p</text><text transform="translate(359.87,484.80) scale(1.160,1)" fill="#000" stroke="#000" stroke-width="0.44999999999999996">c</text><text transform="translate(383.14,484.80) scale(0.858,1)" fill="#000" stroke="#000" stroke-width="0.8">m</text><text transform="translate(394.55,484.80) scale(1.053,1)" fill="#000" stroke="#000" stroke-width="0.55">e</text><g transform="translate(0,0)" fill="#fff" stroke="#fff"><rect x="317.1" y="481.9" width="1.9" height="1.9" stroke="none"/><rect x="372.4" y="481.9" width="1.9" height="1.9" stroke="none"/><path d="M282.0,468.9 Q275.0,477.1 282.0,485.4" fill="none" stroke-width="1.35"/><path d="M406.6,468.9 Q413.6,477.1 406.6,485.4" fill="none" stroke-width="1.35"/></g><text transform="translate(283.92,483.70) scale(0.787,1)" fill="#fff" stroke="#fff" stroke-width="0.55">w</text><text transform="translate(294.22,483.70) scale(0.779,1)" fill="#fff" stroke="#fff" stroke-width="0.55">w</text><text transform="translate(304.12,483.70) scale(0.787,1)" fill="#fff" stroke="#fff" stroke-width="0.55">w</text><text transform="translate(327.48,483.70) scale(1.125,1)" fill="#fff" stroke="#fff" stroke-width="0.15">p</text><text transform="translate(338.19,483.70) scale(1.132,1)" fill="#fff" stroke="#fff" stroke-width="0.15">c</text><text transform="translate(348.28,483.70) scale(1.125,1)" fill="#fff" stroke="#fff" stroke-width="0.15">p</text><text transform="translate(358.77,483.70) scale(1.160,1)" fill="#fff" stroke="#fff" stroke-width="0.15">c</text><text transform="translate(382.04,483.70) scale(0.858,1)" fill="#fff" stroke="#fff" stroke-width="0.5">m</text><text transform="translate(393.45,483.70) scale(1.053,1)" fill="#fff" stroke="#fff" stroke-width="0.25">e</text></g></g>
</svg>
</body></html>
